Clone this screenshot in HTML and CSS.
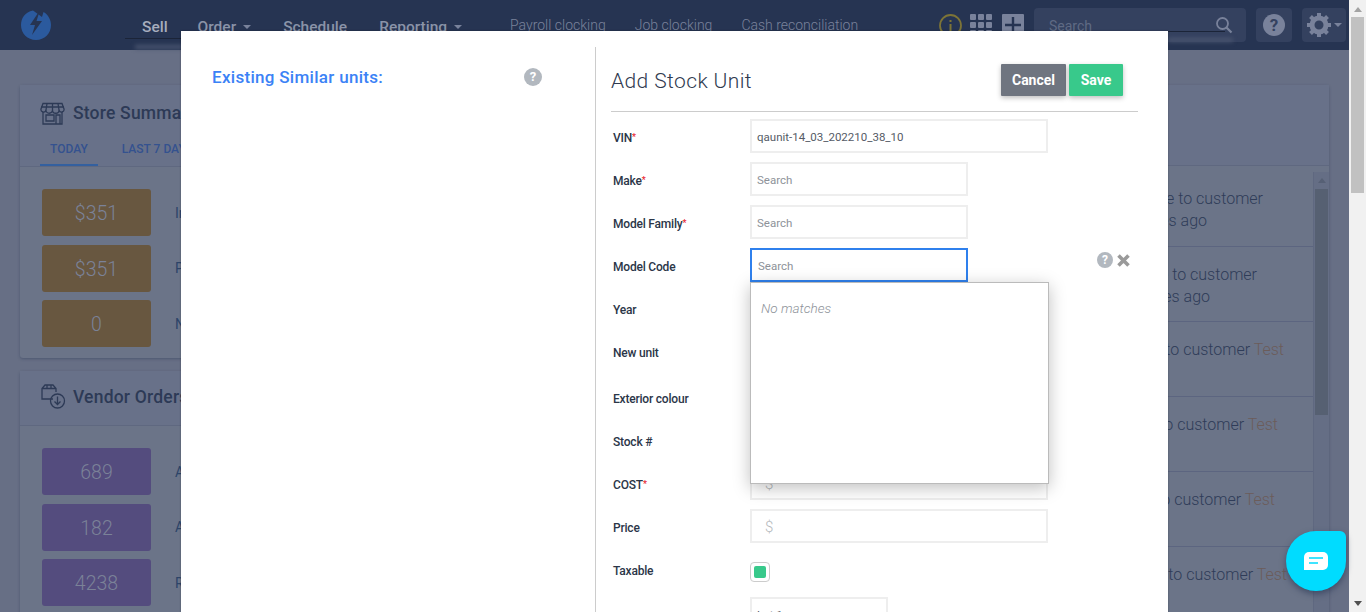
FILE: index.html
```html
<!DOCTYPE html>
<html lang="en">
<head>
    <meta charset="UTF-8">
    <title>Add Stock Unit</title>
    <link rel="stylesheet" href="styles.css">
</head>
<body>
<div id="page">
    <div id="navbar">
        <svg class="logo" width="32" height="32" viewBox="0 0 32 32">
            <path fill="#2b5a9e" d="M13 1.500C5 3 1 9 1 16c0 8.500 6.500 15 15 15s15-6.500 15-15c0-5.500-3-10.500-7.500-13L22 8 13 1.500z"/>
            <path fill="#263452" d="M20 1 10 16h5l-3 10 10-14h-5.500L20 1z"/>
        </svg>
        <ul id="mainnav">
            <li class="sell">Sell</li>
            <li class="order">Order<span class="caret"></span></li>
            <li class="schedule">Schedule</li>
            <li class="reporting">Reporting<span class="caret"></span></li>
        </ul>
        <ul id="subnav">
            <li>Payroll clocking</li>
            <li>Job clocking</li>
            <li>Cash reconciliation</li>
        </ul>
        <div id="navtools">
            <svg width="23" height="23" viewBox="0 0 23 23">
                <circle cx="11.500" cy="11.500" r="10.500" fill="none" stroke="#7d7437" stroke-width="1.800"/>
                <rect x="10.500" y="10" width="2" height="7" fill="#7d7437"/>
                <rect x="10.500" y="6" width="2" height="2" fill="#7d7437"/>
            </svg>
            <div class="apps">
                <i></i><i></i><i></i><i></i><i></i><i></i><i></i><i></i><i></i>
            </div>
            <div class="plus">
                <svg width="22" height="22" viewBox="0 0 22 22"><path stroke="#263452" stroke-width="2.400" d="M11 3v16M3 11h16"/></svg>
            </div>
            <div class="navsearch">
                <span>Search</span>
                <svg width="18" height="18" viewBox="0 0 18 18"><circle cx="7.500" cy="7.500" r="5.500" fill="none" stroke="#79829b" stroke-width="1.800"/><path stroke="#79829b" stroke-width="2.200" d="M11.500 11.500l5 5"/></svg>
            </div>
            <div class="navbtn help"><span>?</span></div>
            <div class="navbtn gear">
                <svg width="24" height="24" viewBox="0 0 24 24">
                    <circle cx="12" cy="12" r="7" fill="none" stroke="#79829b" stroke-width="5"/>
                    <path stroke="#79829b" stroke-width="4" d="M12 0v5M12 19v5M0 12h5M19 12h5M3.500 3.500l3.500 3.500M17 17l3.500 3.500M3.500 20.500L7 17M17 7l3.500-3.500"/>
                </svg>
                <span class="caret"></span>
            </div>
        </div>
    </div>

    <div id="content">
        <div class="leftcol">
            <div class="card summary">
                <div class="cardhead">
                    <h3>
                        <svg width="25" height="23" viewBox="0 0 25 23" fill="none" stroke="#2d3a56" stroke-width="1.300">
                            <path d="M3 1.500h19l2 5.500a2.500 2.500 0 0 1-5 1 2.500 2.500 0 0 1-6.500 0 2.500 2.500 0 0 1-6.500 0 2.500 2.500 0 0 1-5-1z"/>
                            <path d="M3 10v12h19V10M6 13h8v6H6zM16 13h4v9h-4zM7 1.500 6 8M12.500 1.500V8M18 1.500 19 8M1 5h23"/>
                        </svg>
                        Store Summary
                    </h3>
                    <ul class="tabs">
                        <li class="selected">TODAY</li>
                        <li>LAST 7 DAYS</li>
                    </ul>
                </div>
                <div class="tiles">
                    <div class="tile"><b class="amber">$351</b><span class="blue">Invoiced</span></div>
                    <div class="tile"><b class="amber">$351</b><span class="blue">Paid</span></div>
                    <div class="tile"><b class="amber">0</b><span class="blue">New</span></div>
                </div>
            </div>
            <div class="card vendor">
                <div class="cardhead">
                    <h3>
                        <svg width="26" height="26" viewBox="0 0 26 26" fill="none" stroke="#2d3a56" stroke-width="1.300">
                            <path d="M13 15H2V4.500L5 1h8l3 3.500V8M2 4.500h14M7 1v3.500M11 1v3.500"/>
                            <circle cx="17.500" cy="17" r="7"/>
                            <path d="M17.500 12.500v8M14.500 17.500l3 3 3-3"/>
                        </svg>
                        Vendor Orders
                    </h3>
                </div>
                <div class="tiles">
                    <div class="tile"><b class="purple">689</b><span>All</span></div>
                    <div class="tile"><b class="purple">182</b><span>Active</span></div>
                    <div class="tile"><b class="purple">4238</b><span>Received</span></div>
                </div>
            </div>
        </div>
        <div class="card feed">
            <div class="feedhead"></div>
            <div class="feedbody">
                <div class="rows">
                    <div class="row"><p class="e1">Stock unit sale to customer</p><p class="e2">5 minutes ago</p></div>
                    <div class="row"><p class="e3">Stock unit sale to customer</p><p class="e4">9 minutes ago</p></div>
                    <div class="row"><p class="e5">Stock unit sale to customer <em>Test</em></p></div>
                    <div class="row"><p class="e6">Stock unit sale to customer <em>Test</em></p></div>
                    <div class="row"><p class="e7">Stock unit sale to customer <em>Test</em></p></div>
                    <div class="row"><p class="e8">Stock unit sale to customer <em>Test</em></p></div>
                </div>
                <div class="innerscroll"><span></span><i></i></div>
            </div>
        </div>
    </div>
</div>

<div id="scrollbar">
    <span class="up"></span>
    <i></i>
    <span class="down"></span>
</div>

<div id="modal">
    <div class="similar">
        <h4>Existing Similar units:</h4>
        <span class="qmark big">?</span>
    </div>
    <div class="unitform">
        <div class="formhead">
            <h2>Add Stock Unit</h2>
            <button class="btn cancel">Cancel</button>
            <button class="btn save">Save</button>
        </div>
        <div class="fields">
            <div class="field"><label>VIN<sup>*</sup></label><div class="input wide value">qaunit-14_03_202210_38_10</div></div>
            <div class="field"><label>Make<sup>*</sup></label><div class="input">Search</div></div>
            <div class="field"><label>Model Family<sup>*</sup></label><div class="input">Search</div></div>
            <div class="field">
                <label>Model Code</label>
                <div class="input focus">Search</div>
                <div class="fieldicons">
                    <span class="qmark">?</span>
                    <svg width="13" height="13" viewBox="0 0 13 13"><path stroke="#9a9a9a" stroke-width="3.600" d="M1.500 1.500l10 10M11.500 1.500l-10 10"/></svg>
                </div>
                <div class="dropdown">No matches</div>
            </div>
            <div class="field"><label>Year</label><div class="input"></div></div>
            <div class="field"><label>New unit</label><div class="check off"></div></div>
            <div class="field colour"><label>Exterior colour</label><div class="input"></div></div>
            <div class="field"><label>Stock #</label><div class="input wide"></div></div>
            <div class="field"><label>COST<sup>*</sup></label><div class="input wide money">$</div></div>
            <div class="field"><label>Price</label><div class="input wide money">$</div></div>
            <div class="field taxable"><label>Taxable</label><div class="check"><i></i></div></div>
            <div class="field"><label></label><div class="input short value">Lot 1</div></div>
        </div>
    </div>
</div>

<div id="chat">
    <svg width="24" height="18" viewBox="0 0 24 18">
        <path fill="#fff" d="M5 0h14a5 5 0 0 1 5 5v8a5 5 0 0 1-5 5H0V5a5 5 0 0 1 5-5z"/>
        <path stroke="#00dcff" stroke-width="1.600" d="M5 6h14M5 11h9"/>
    </svg>
</div>
</body>
</html>
```

FILE: styles.css
```css
*{
    margin: 0;
    padding: 0;
    box-sizing: border-box;
}
ul{
    list-style: none;
}
html,body{
    height: 612px;
    overflow: hidden;
}
body{
    display: flex;
    font-family: "Roboto", "Liberation Sans", sans-serif;
    background: #676f85;
    position: relative;
}
#page{
    flex: 1;
    min-width: 0;
}
#navbar{
    height: 50px;
    background: #263452;
    display: flex;
    align-items: center;
    padding-left: 20px;
    color: #8a93a8;
}
.logo{
    flex: none;
}
#mainnav{
    display: flex;
    margin-left: 90px;
    font-size: 15.500px;
    font-weight: 500;
    padding-top: 3px;
}
.sell{
    margin-right: 30px;
    color: #a6adbd;
    position: relative;
}
.sell::before{
    content: "";
    position: absolute;
    left: -17px;
    top: 20px;
    width: 60px;
    height: 1px;
    background: #1b2438;
}
.sell::after{
    content: "";
    position: absolute;
    left: -7px;
    top: 27px;
    width: 50px;
    height: 4px;
    background: #4a5570;
    filter: blur(2px);
}
.order{
    margin-right: 32px;
}
.schedule{
    margin-right: 32px;
}
.reporting{
    margin-right: 48px;
}
.caret{
    display: inline-block;
    margin-left: 7px;
    vertical-align: middle;
    border-left: 4px solid transparent;
    border-right: 4px solid transparent;
    border-top: 4px solid #79829b;
}
#subnav{
    display: flex;
    gap: 29px;
    font-size: 14px;
    font-weight: 300;
    color: #79829b;
}
#navtools{
    display: flex;
    align-items: center;
    position: absolute;
    left: 939px;
    top: 8px;
    height: 34px;
}
.apps{
    width: 22px;
    height: 22px;
    margin-left: 8px;
    display: grid;
    grid-template-columns: repeat(3, 6px);
    gap: 2px;
}
.apps i{
    background: #79829b;
    border-radius: 1px;
}
.plus{
    width: 22px;
    height: 22px;
    margin-left: 10px;
    background: #79829b;
    border-radius: 1px;
}
.plus svg{
    display: block;
}
.navsearch{
    width: 212px;
    height: 34px;
    margin-left: 10px;
    background: #34415f;
    border-radius: 4px;
    display: flex;
    align-items: center;
    justify-content: space-between;
    padding: 0 13px 0 15px;
    font-size: 14px;
    color: #5f6a84;
    position: relative;
}
.navsearch span{
    padding-top: 2px;
}
.navsearch::before{
    content: "";
    position: absolute;
    left: 134px;
    top: 23px;
    width: 57px;
    height: 1px;
    background: #1b2438;
}
.navsearch::after{
    content: "";
    position: absolute;
    left: 134px;
    top: 30px;
    width: 65px;
    height: 4px;
    background: #4a5570;
    filter: blur(2px);
}
.navbtn{
    height: 34px;
    background: #34415f;
    border-radius: 4px;
    margin-left: 10px;
    display: flex;
    align-items: center;
    justify-content: center;
}
.help{
    width: 36px;
}
.help span{
    width: 22px;
    height: 22px;
    border-radius: 50%;
    background: #79829b;
    color: #34415f;
    text-align: center;
    font-size: 17px;
    line-height: 22px;
    font-weight: 700;
}
.gear{
    width: 44px;
}
.gear .caret{
    margin-left: 3px;
}

#content{
    display: flex;
    gap: 20px;
    padding: 35px 20px 0 20px;
}
.leftcol{
    width: 480px;
    flex: none;
}
.card{
    background: #6b7488;
    border-radius: 3px;
    box-shadow: 0 1px 3px rgba(38,52,82,.4);
}
.summary{
    height: 273px;
    margin-bottom: 13px;
}
.vendor{
    height: 300px;
}
.cardhead{
    background: #687189;
    border-bottom: 1px solid #5f6880;
    padding: 16px 0 0 20px;
}
.vendor .cardhead{
    height: 55px;
    padding-top: 13px;
}
.cardhead h3{
    display: flex;
    align-items: center;
    gap: 8px;
    font-size: 17.500px;
    letter-spacing: .2px;
    font-weight: 500;
    color: #2d3a56;
    height: 24px;
}
.vendor .cardhead h3{
    height: 26px;
    gap: 7px;
}
.tabs{
    display: flex;
    margin-top: 14px;
    height: 27px;
    font-size: 12px;
    font-weight: 500;
    color: #34528f;
}
.tabs li{
    padding: 3px 10px 0;
    margin-right: 14px;
}
.tabs .selected{
    border-bottom: 2px solid #34609f;
}
.tiles{
    padding: 22px 22px 0;
}
.tile{
    display: flex;
    align-items: center;
    height: 47px;
    margin-bottom: 8.500px;
    font-size: 14px;
    color: #2d4468;
}
.tile b{
    width: 109px;
    height: 47px;
    border-radius: 3px;
    margin-right: 24px;
    text-align: center;
    line-height: 49px;
    font-size: 19.500px;
    font-weight: 300;
    color: #7b8298;
}
.amber{
    background: #685740;
}
.purple{
    background: #544c7e;
}
.feed{
    flex: 1;
    height: 560px;
}
.feedhead{
    height: 81px;
    background: #687189;
    border-bottom: 1px solid #5f6880;
}
.feedbody{
    display: flex;
    height: 479px;
}
.rows{
    flex: 1;
    padding-top: 21px;
}
.row{
    height: 75px;
    border-bottom: 1px solid #5c6580;
    font-size: 16px;
    font-weight: 300;
    line-height: 22px;
    color: #2f3c58;
    text-align: right;
}
.row:first-child{
    height: 60px;
    padding-top: 1px;
}
.row em{
    font-style: normal;
    color: #6b5c5a;
}
.row:nth-child(n+2) p:first-child{
    padding-top: 17px;
}
.e1{ padding-right: 50px; }
.e2{ padding-right: 106px; }
.e3{ padding-right: 56px; }
.e4{ padding-right: 103px; }
.e5{ padding-right: 29px; }
.e6{ padding-right: 35px; }
.e7{ padding-right: 38px; }
.e8{ padding-right: 26px; }
.innerscroll{
    width: 16px;
    flex: none;
    background: #656e85;
    border-left: 1px solid #5f6880;
    margin-top: 6px;
}
.innerscroll span{
    display: block;
    width: 0;
    height: 0;
    margin: 6px auto;
    border-left: 4px solid transparent;
    border-right: 4px solid transparent;
    border-bottom: 5px solid #566075;
}
.innerscroll i{
    display: block;
    width: 13px;
    height: 226px;
    margin: 0 auto;
    background: #566072;
}

#scrollbar{
    width: 17px;
    flex: none;
    background: #f1f1f1;
    display: flex;
    flex-direction: column;
    align-items: center;
}
#scrollbar i{
    width: 13px;
    height: 176px;
    background: #c1c1c1;
    margin-top: 5px;
}
#scrollbar .up,#scrollbar .down{
    width: 0;
    height: 0;
    border-left: 4px solid transparent;
    border-right: 4px solid transparent;
}
#scrollbar .up{
    margin-top: 7px;
    border-bottom: 5px solid #a3a3a3;
}
#scrollbar .down{
    margin-top: auto;
    margin-bottom: 6px;
    border-top: 5px solid #505050;
}

#modal{
    position: absolute;
    left: 181px;
    top: 31px;
    width: 987px;
    height: 640px;
    background: #fff;
    display: flex;
    padding-top: 16px;
    box-shadow: 0 0 2px rgba(0,0,0,.3);
}
.similar{
    width: 415px;
    flex: none;
    border-right: 1px solid #ccc;
    display: flex;
    justify-content: space-between;
    padding: 20px 53px 0 31px;
    align-items: flex-start;
}
.similar h4{
    font-size: 17px;
    letter-spacing: .3px;
    font-weight: 500;
    color: #3b82f6;
}
.qmark{
    display: inline-block;
    width: 16px;
    height: 16px;
    border-radius: 50%;
    background: #b2b8bf;
    color: #fff;
    text-align: center;
    font-size: 12px;
    line-height: 16px;
    font-weight: 700;
}
.qmark.big{
    width: 18px;
    height: 18px;
    font-size: 13px;
    line-height: 18px;
    margin-top: 1px;
}
.unitform{
    flex: 1;
    padding: 0 30px 0 15px;
}
.formhead{
    display: flex;
    align-items: center;
    height: 65px;
    padding: 2px 15px 0 0;
    gap: 3px;
    border-bottom: 1px solid #ccc;
}
.formhead h2{
    flex: 1;
    font-size: 21px;
    font-weight: 300;
    color: #2f3a4f;
    letter-spacing: .4px;
    padding-top: 2px;
}
.btn{
    border: 0;
    height: 32px;
    color: #fff;
    font-family: inherit;
    font-size: 14px;
    font-weight: 700;
    border-radius: 1px;
    box-shadow: 0 2px 5px rgba(0,0,0,.25);
}
.cancel{
    width: 65px;
    background: #6f7580;
}
.save{
    width: 54px;
    background: #38c98b;
}
.fields{
    padding-top: 7px;
}
.field{
    display: flex;
    position: relative;
    height: 43px;
}
.colour{
    margin-top: 3px;
}
.taxable{
    height: 45px;
}
.taxable .check{
    margin-top: 10px;
}
.field label{
    width: 139px;
    padding-left: 2px;
    flex: none;
    font-size: 12px;
    letter-spacing: -.2px;
    font-weight: 500;
    line-height: 38px;
    color: #2b3648;
}
.field label sup{
    color: #e8222c;
    font-size: 9px;
    line-height: 0;
    vertical-align: 2px;
}
.input{
    width: 218px;
    height: 34px;
    border: 2px solid #eee;
    padding-left: 5px;
    font-size: 11.500px;
    line-height: 32px;
    color: #8d9299;
}
.input.wide{
    width: 298px;
}
.input.short{
    width: 138px;
}
.input.value{
    color: #555b66;
}
.money{
    font-size: 15px;
    padding-left: 13px;
    color: #b4b8bc;
    font-weight: 300;
}
.focus{
    border-color: #2f80ed;
    padding-left: 6px;
}
.check{
    width: 20px;
    height: 20px;
    border: 1px solid #ccc;
    border-radius: 4px;
    margin-top: 7px;
    padding: 3px;
}
.check i{
    display: block;
    height: 12px;
    background: #38c98b;
    border-radius: 2px;
}
.fieldicons{
    position: absolute;
    left: 486px;
    top: 4px;
    display: flex;
    align-items: center;
    gap: 4px;
}
.dropdown{
    position: absolute;
    left: 139px;
    top: 34px;
    width: 299px;
    height: 202px;
    background: #fff;
    border: 1px solid #bbb;
    box-shadow: 0 4px 16px rgba(0,0,0,.25);
    padding: 17px 10px;
    font-size: 13.500px;
    font-style: italic;
    font-weight: 300;
    color: #8d9299;
    z-index: 2;
}

#chat{
    position: absolute;
    left: 1286px;
    top: 531px;
    width: 60px;
    height: 60px;
    background: #00dcff;
    border-radius: 50% 6px 50% 50%;
    box-shadow: 0 3px 6px rgba(38,52,82,.6);
    display: flex;
    align-items: center;
    justify-content: center;
}
```
